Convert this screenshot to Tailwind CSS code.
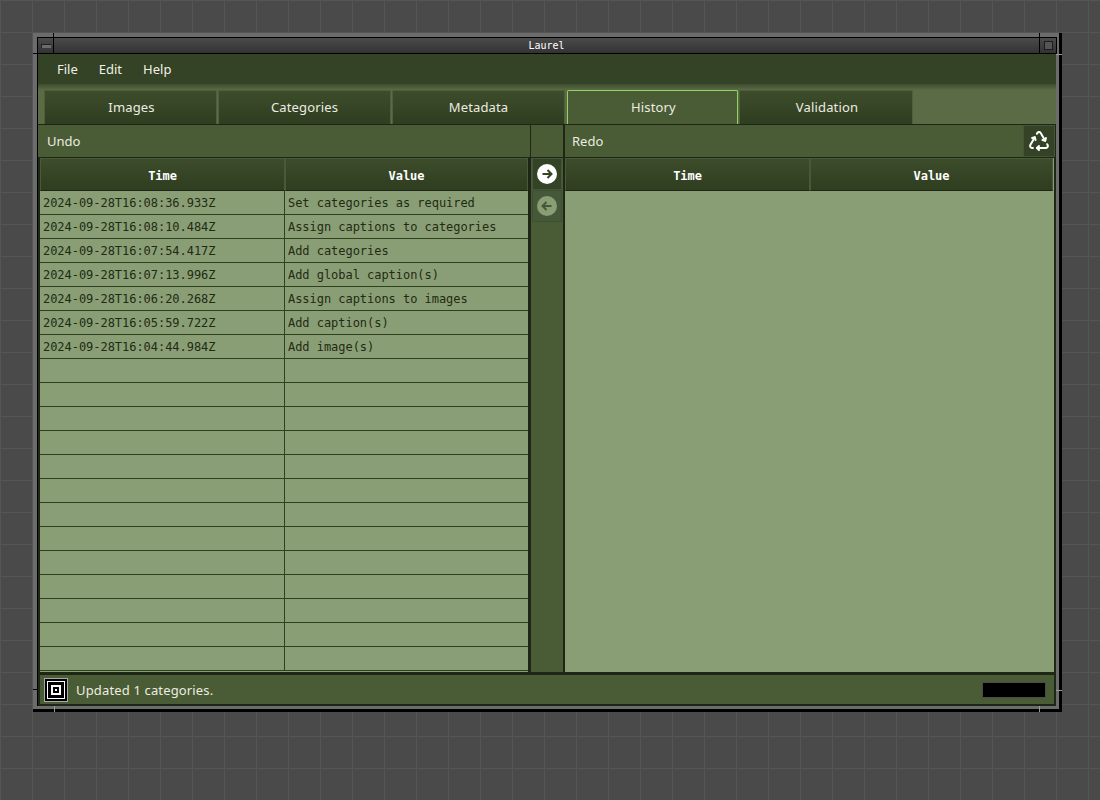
<!DOCTYPE html>
<html>
<head>
<meta charset="utf-8">
<script src="https://cdn.jsdelivr.net/npm/@tailwindcss/browser@4"></script>
</head>
<body class="m-0 h-[800px] w-[1100px] overflow-hidden relative bg-[#4a4a4a] bg-[linear-gradient(to_right,#555555_1px,transparent_1px),linear-gradient(to_bottom,#555555_1px,transparent_1px)] bg-[size:32px_32px] font-['Noto_Sans',sans-serif]">
<div class="absolute left-[33px] top-[33px] w-[1029px] h-[679px] bg-[#6c6c6c] border-r-[3px] border-b-[3px] border-black pl-[4px] pt-[4px] pr-[3px] pb-[3px]">
  <div class="relative h-[669px] w-[1019px] border-l border-t border-black flex flex-col">
    <!-- title bar -->
    <div class="h-[16px] shrink-0 flex border-b border-black bg-gradient-to-b from-[#4b4b4b] to-[#333333]">
      <div class="w-[16px] shrink-0 border-r border-black flex items-center justify-center">
        <div class="w-[10px] h-[4px] bg-[#6c6c6c] border-t border-l border-[#222222] border-b-[#999999]"></div>
      </div>
      <div class="flex-1 text-center text-white text-[10px] leading-[15px] font-['DejaVu_Sans_Mono',monospace]">Laurel</div>
      <div class="w-[17px] shrink-0 border-l border-black flex items-center justify-center">
        <div class="w-[9px] h-[9px] border border-[#1c1c1c] bg-[#555555]"></div>
      </div>
    </div>
    <!-- menu -->
    <div class="h-[30px] shrink-0 bg-[#344325] flex items-center pl-[19px] pt-[2px] gap-[21px] text-[13px] text-[#f0f0e8]">
      <span>File</span><span>Edit</span><span>Help</span>
    </div>
    <!-- tabs -->
    <div class="h-[40px] shrink-0 bg-[linear-gradient(to_bottom,#3f4d30,#5a6b45_6px)] flex items-end pl-[6px] text-[13px] tracking-[0.15px] text-[#ecece0]">
      <div class="w-[173px] mr-px h-[34px] pl-[2px] flex items-center justify-center bg-gradient-to-b from-[#3d4d2b] to-[#2f3d20] border border-b-0 border-[#4f5f3e]">Images</div>
      <div class="w-[173px] mr-px h-[34px] flex items-center justify-center bg-gradient-to-b from-[#3d4d2b] to-[#2f3d20] border border-b-0 border-[#4f5f3e]">Categories</div>
      <div class="w-[173px] mr-[2px] h-[34px] flex items-center justify-center bg-gradient-to-b from-[#3d4d2b] to-[#2f3d20] border border-b-0 border-[#4f5f3e]">Metadata</div>
      <div class="w-[171px] mr-px h-[34px] pl-[2px] flex items-center justify-center bg-[#4a5c35] border border-b-0 border-[#93d35f] rounded-t-[2px]">History</div>
      <div class="w-[174px] h-[34px] pl-[2px] flex items-center justify-center bg-gradient-to-b from-[#3d4d2b] to-[#2f3d20] border border-b-0 border-[#4f5f3e]">Validation</div>
    </div>
    <!-- main -->
    <div class="flex-1 bg-[#1e2616] flex flex-col">
      <!-- headings -->
      <div class="h-[34px] shrink-0 pt-px pb-px flex text-[13px] text-[#ecece0]">
        <div class="w-[492px] bg-[#4a5c35] pl-[9px] pt-[2px] flex items-center">Undo</div>
        <div class="w-[32px] ml-px bg-[#4a5c35]"></div>
        <div class="w-[458px] ml-[2px] bg-[#4a5c35] pl-[7px] pt-[2px] flex items-center">Redo</div>
        <div class="w-[32px] bg-[#344325] border border-[#45553a] flex items-center justify-center">
          <svg width="24" height="24" viewBox="0 0 24 24" fill="none" stroke="#ffffff" stroke-width="2" stroke-linecap="round" stroke-linejoin="round">
            <g><path d="M12 17l-2 2l2 2"/><path d="M10 19h9a2 2 0 0 0 1.75 -2.75l-.55 -1"/></g>
            <g transform="rotate(120 12 13)"><path d="M12 17l-2 2l2 2"/><path d="M10 19h9a2 2 0 0 0 1.75 -2.75l-.55 -1"/></g>
            <g transform="rotate(240 12 13)"><path d="M12 17l-2 2l2 2"/><path d="M10 19h9a2 2 0 0 0 1.75 -2.75l-.55 -1"/></g>
          </svg>
        </div>
      </div>
      <!-- tables row -->
      <div class="h-[514px] shrink-0 flex pl-[2px] font-['DejaVu_Sans_Mono',monospace] text-[12px] tracking-[-0.04px]">
        <div class="w-[488px] bg-[#8a9e75] text-[#1f2a14]">
          <div class="flex h-[33px] text-white font-bold">
            <div class="w-[245px] h-[33px] pt-[2px] flex items-center justify-center bg-gradient-to-b from-[#3d4d2b] to-[#2f3d20] border border-[#4a5a38] border-b-[#1e2616]">Time</div>
            <div class="w-[243px] h-[33px] pt-[2px] flex items-center justify-center bg-gradient-to-b from-[#3d4d2b] to-[#2f3d20] border border-[#4a5a38] border-b-[#1e2616]">Value</div>
          </div>
          <div class="flex h-[24px] border-b border-[#2f3f20]"><div class="w-[245px] pl-[3px] border-r border-[#2f3f20] leading-[25px]">2024-09-28T16:08:36.933Z</div><div class="pl-[3px] leading-[25px]">Set categories as required</div></div>
          <div class="flex h-[24px] border-b border-[#2f3f20]"><div class="w-[245px] pl-[3px] border-r border-[#2f3f20] leading-[25px]">2024-09-28T16:08:10.484Z</div><div class="pl-[3px] leading-[25px]">Assign captions to categories</div></div>
          <div class="flex h-[24px] border-b border-[#2f3f20]"><div class="w-[245px] pl-[3px] border-r border-[#2f3f20] leading-[25px]">2024-09-28T16:07:54.417Z</div><div class="pl-[3px] leading-[25px]">Add categories</div></div>
          <div class="flex h-[24px] border-b border-[#2f3f20]"><div class="w-[245px] pl-[3px] border-r border-[#2f3f20] leading-[25px]">2024-09-28T16:07:13.996Z</div><div class="pl-[3px] leading-[25px]">Add global caption(s)</div></div>
          <div class="flex h-[24px] border-b border-[#2f3f20]"><div class="w-[245px] pl-[3px] border-r border-[#2f3f20] leading-[25px]">2024-09-28T16:06:20.268Z</div><div class="pl-[3px] leading-[25px]">Assign captions to images</div></div>
          <div class="flex h-[24px] border-b border-[#2f3f20]"><div class="w-[245px] pl-[3px] border-r border-[#2f3f20] leading-[25px]">2024-09-28T16:05:59.722Z</div><div class="pl-[3px] leading-[25px]">Add caption(s)</div></div>
          <div class="flex h-[24px] border-b border-[#2f3f20]"><div class="w-[245px] pl-[3px] border-r border-[#2f3f20] leading-[25px]">2024-09-28T16:04:44.984Z</div><div class="pl-[3px] leading-[25px]">Add image(s)</div></div>
          <div class="flex h-[24px] border-b border-[#2f3f20]"><div class="w-[245px] border-r border-[#2f3f20]"></div></div>
          <div class="flex h-[24px] border-b border-[#2f3f20]"><div class="w-[245px] border-r border-[#2f3f20]"></div></div>
          <div class="flex h-[24px] border-b border-[#2f3f20]"><div class="w-[245px] border-r border-[#2f3f20]"></div></div>
          <div class="flex h-[24px] border-b border-[#2f3f20]"><div class="w-[245px] border-r border-[#2f3f20]"></div></div>
          <div class="flex h-[24px] border-b border-[#2f3f20]"><div class="w-[245px] border-r border-[#2f3f20]"></div></div>
          <div class="flex h-[24px] border-b border-[#2f3f20]"><div class="w-[245px] border-r border-[#2f3f20]"></div></div>
          <div class="flex h-[24px] border-b border-[#2f3f20]"><div class="w-[245px] border-r border-[#2f3f20]"></div></div>
          <div class="flex h-[24px] border-b border-[#2f3f20]"><div class="w-[245px] border-r border-[#2f3f20]"></div></div>
          <div class="flex h-[24px] border-b border-[#2f3f20]"><div class="w-[245px] border-r border-[#2f3f20]"></div></div>
          <div class="flex h-[24px] border-b border-[#2f3f20]"><div class="w-[245px] border-r border-[#2f3f20]"></div></div>
          <div class="flex h-[24px] border-b border-[#2f3f20]"><div class="w-[245px] border-r border-[#2f3f20]"></div></div>
          <div class="flex h-[24px] border-b border-[#2f3f20]"><div class="w-[245px] border-r border-[#2f3f20]"></div></div>
          <div class="flex h-[24px] border-b border-[#2f3f20]"><div class="w-[245px] border-r border-[#2f3f20]"></div></div>
        </div>
        <!-- middle -->
        <div class="w-[32px] ml-[3px] bg-[#4a5c35] flex flex-col items-center">
          <div class="w-[30px] h-[32px] mt-0 flex items-center justify-center bg-[#344325] border border-[#45553a]">
            <svg width="20" height="20" viewBox="0 0 20 20"><circle cx="10" cy="10" r="10" fill="#ffffff"/><path d="M5.5 10h9M10.5 6l4 4l-4 4" fill="none" stroke="#344325" stroke-width="2"/></svg>
          </div>
          <div class="w-[30px] h-[32px] flex items-center justify-center bg-[#46583a] border border-[#3f5030]">
            <svg width="20" height="20" viewBox="0 0 20 20"><circle cx="10" cy="10" r="10" fill="#8a9e75"/><path d="M14.5 10h-9M9.5 6l-4 4l4 4" fill="none" stroke="#46583a" stroke-width="2"/></svg>
          </div>
        </div>
        <!-- right table -->
        <div class="w-[489px] ml-[2px] bg-[#8a9e75]">
          <div class="flex h-[33px] text-white font-bold">
            <div class="w-[245px] h-[33px] pt-[2px] flex items-center justify-center bg-gradient-to-b from-[#3d4d2b] to-[#2f3d20] border border-[#4a5a38] border-b-[#1e2616]">Time</div>
            <div class="w-[243px] h-[33px] pt-[2px] flex items-center justify-center bg-gradient-to-b from-[#3d4d2b] to-[#2f3d20] border border-[#4a5a38] border-b-[#1e2616]">Value</div>
          </div>
        </div>
      </div>
      <div class="h-[3px] shrink-0"></div>
    </div>
    <!-- status -->
    <div class="h-[31px] shrink-0 bg-[#1e2616] px-[2px] pb-[2px]">
      <div class="h-[29px] w-[1014px] bg-[#4a5c35] flex items-center pl-[4px] text-[13px] tracking-[0.15px] text-[#ecece0]">
        <div class="w-[24px] h-[24px] mt-px bg-black border border-[#a8a8a8] flex items-center justify-center shrink-0">
          <div class="w-[18px] h-[18px] border border-white flex items-center justify-center">
            <div class="w-[10px] h-[10px] border-2 border-white flex items-center justify-center">
              <div class="w-[2px] h-[2px] bg-white"></div>
            </div>
          </div>
        </div>
        <span class="ml-[8px] pt-[2px]">Updated 1 categories.</span>
        <div class="ml-auto mr-[8px] mt-px w-[64px] h-[16px] bg-black border border-[#4a4a4a]"></div>
      </div>
    </div>
    <!-- frame notches -->
    <div class="absolute left-[-5px] top-[15px] w-[5px] h-px bg-black"></div>
    <div class="absolute left-[15px] top-[-5px] w-px h-[5px] bg-black"></div>
    <div class="absolute right-[16px] top-[-5px] w-px h-[5px] bg-black"></div>
    <div class="absolute right-[-1px] top-[-1px] w-px h-[17px] bg-black"></div>
    <div class="absolute right-[-6px] top-[16px] w-[6px] h-px bg-[#9a9a9a]"></div>
    <div class="absolute left-[-5px] bottom-[16px] w-[5px] h-px bg-black"></div>
    <div class="absolute left-[16px] bottom-[-6px] w-px h-[6px] bg-[#9a9a9a]"></div>
    <div class="absolute right-[16px] bottom-[-6px] w-px h-[6px] bg-[#9a9a9a]"></div>
    <div class="absolute right-[-6px] bottom-[15px] w-[6px] h-px bg-[#9a9a9a]"></div>
  </div>
</div>
</body>
</html>
